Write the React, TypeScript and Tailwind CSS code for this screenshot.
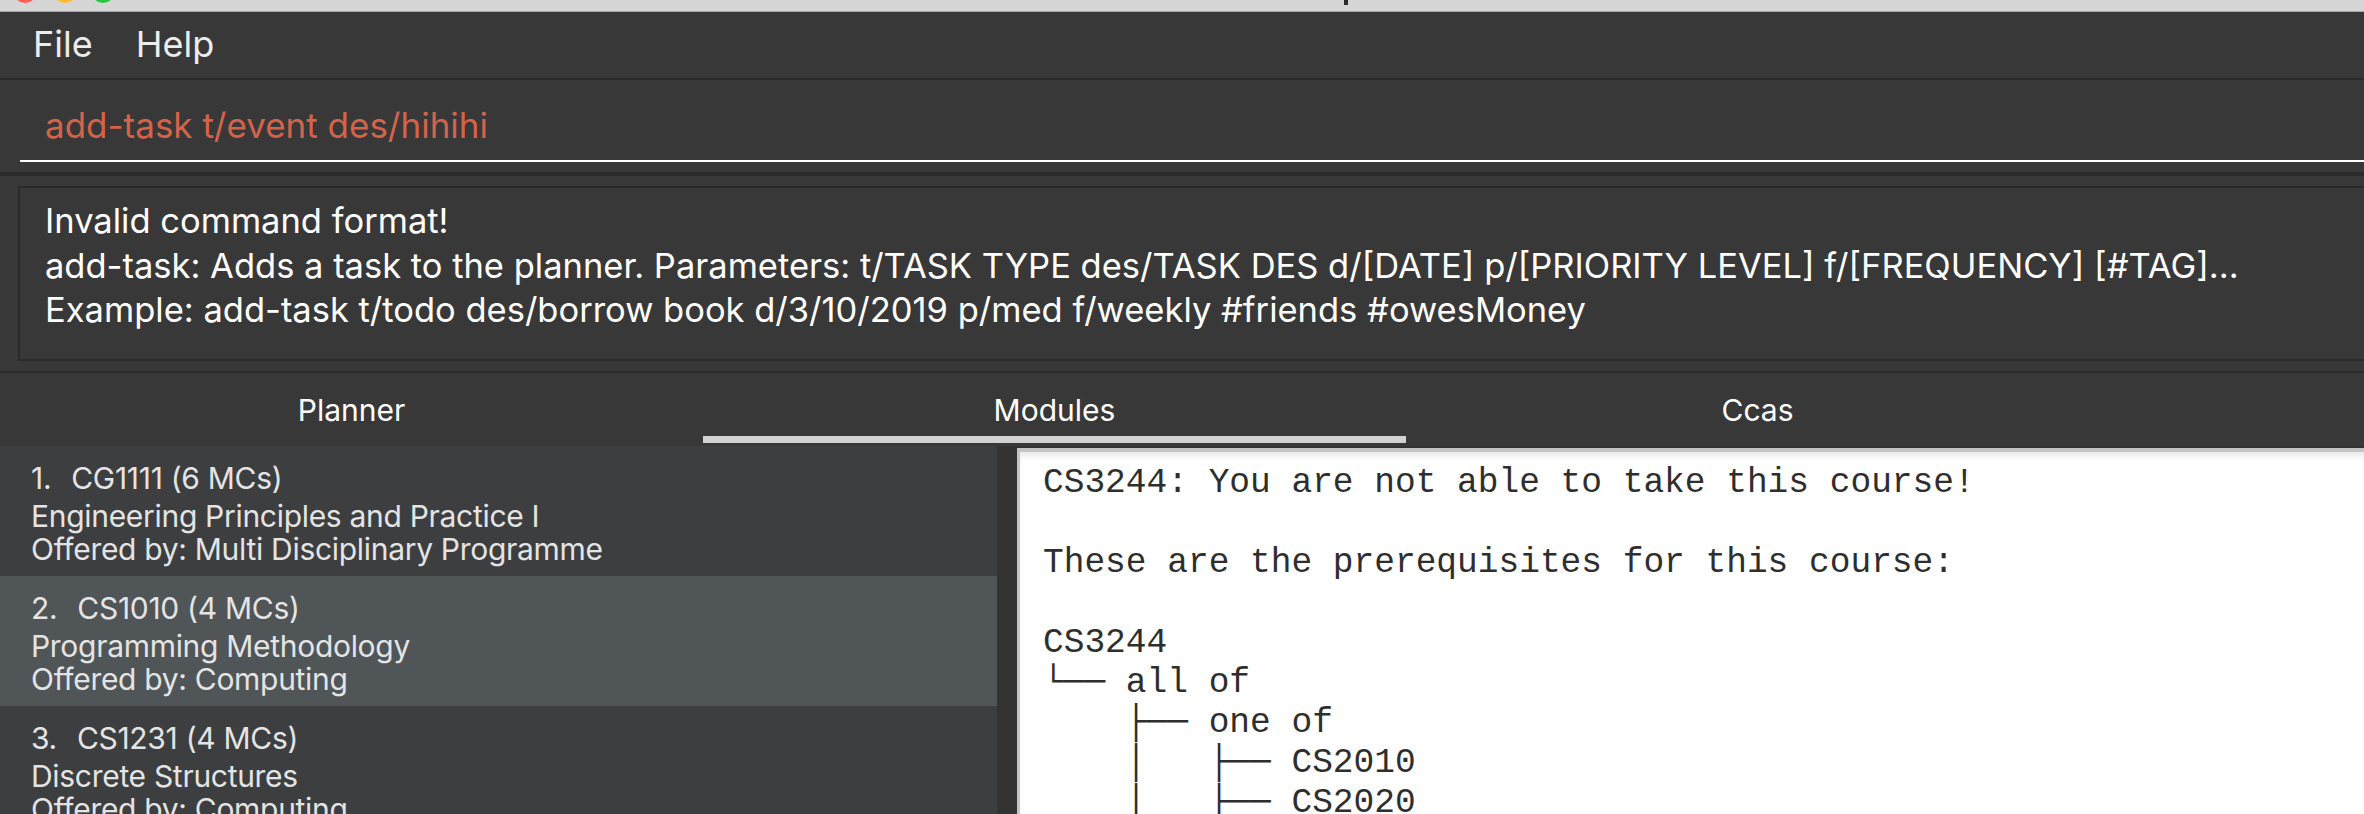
import React from "react";

interface IModule {
  code: string;
  mcs: number;
  title: string;
  faculty: string;
}

const modules: IModule[] = [
  { code: "CG1111", mcs: 6, title: "Engineering Principles and Practice I", faculty: "Multi Disciplinary Programme" },
  { code: "CS1010", mcs: 4, title: "Programming Methodology", faculty: "Computing" },
  { code: "CS1231", mcs: 4, title: "Discrete Structures", faculty: "Computing" },
  { code: "CS2030", mcs: 4, title: "Programming Methodology II", faculty: "Computing" },
];

const tabs = ["Planner", "Modules", "Ccas"];

const prereqLines = [
  "CS3244: You are not able to take this course!",
  "",
  "These are the prerequisites for this course:",
  "",
  "CS3244",
  "└── all of",
  "    ├── one of",
  "    │   ├── CS2010",
  "    │   ├── CS2020",
  "    │   └── CS2040",
];

const sans = "font-['Inter','Liberation_Sans',sans-serif]";

const ModuleCard: React.FC<{ module: IModule; index: number; selected: boolean }> = ({
  module,
  index,
  selected,
}) => {
  return (
    <div
      className={`h-[130px] shrink-0 pl-[31px] pt-[16px] text-[30px] tracking-[-0.3px] text-[#e4e4e4] ${
        selected ? "bg-[#505558]" : "bg-[#3c3e40]"
      }`}
    >
      <div className="flex gap-[20px] leading-[33px] whitespace-nowrap">
        <span>{index + 1}.</span>
        <span>
          {module.code} ({module.mcs} MCs)
        </span>
      </div>
      <div className="mt-[5px] leading-[33px] whitespace-nowrap">{module.title}</div>
      <div className="leading-[33px] whitespace-nowrap">Offered by: {module.faculty}</div>
    </div>
  );
};

export default function App() {
  return (
    <div className={`h-[814px] w-[2364px] overflow-hidden flex flex-col bg-[#383838] ${sans}`}>
      {/* Window title bar */}
      <div className="relative h-[12px] shrink-0 bg-[#d6d6d6] border-b border-[#a8a8a8] overflow-hidden">
        <div className="absolute left-[13px] top-[-21px] w-[24px] h-[24px] rounded-full bg-[#ff5f57]" />
        <div className="absolute left-[53px] top-[-21px] w-[24px] h-[24px] rounded-full bg-[#febc2e]" />
        <div className="absolute left-[91px] top-[-21px] w-[24px] h-[24px] rounded-full bg-[#28c840]" />
        <div className="absolute left-[1344px] top-0 w-[4px] h-[5px] bg-[#2a2a2a]" />
      </div>

      {/* Menu bar */}
      <div className="h-[68px] shrink-0 flex items-center gap-[43px] pl-[33px] pb-[2px] text-[36px] text-[#ececec] border-b-2 border-[#2a2a2a]">
        <span>File</span>
        <span>Help</span>
      </div>

      {/* Command box */}
      <div className="h-[96px] shrink-0 pl-[20px] border-b-4 border-[#2b2b2b]">
        <div className="h-[82px] pt-[25px] pl-[25px] border-b-2 border-white">
          <div className="text-[35px] leading-[40px] text-[#d4634a] whitespace-nowrap">
            add-task t/event des/hihihi
          </div>
        </div>
      </div>

      {/* Result display */}
      <div className="h-[197px] shrink-0 pt-[10px] pl-[18px] border-b-2 border-[#2b2b2b]">
        <div className="h-[175px] w-[2400px] border-2 border-[#2a2a2a] pt-[11px] pl-[25px] text-[34.5px] leading-[44.5px] text-white whitespace-nowrap">
          <div>Invalid command format!</div>
          <div>
            add-task: Adds a task to the planner. Parameters: t/TASK TYPE des/TASK DES d/[DATE] p/[PRIORITY LEVEL]
            f/[FREQUENCY] [#TAG]...
          </div>
          <div>Example: add-task t/todo des/borrow book d/3/10/2019 p/med f/weekly #friends #owesMoney</div>
        </div>
      </div>

      {/* Tabs */}
      <div className="h-[73px] shrink-0 flex">
        {tabs.map((tab) => (
          <div key={tab} className="w-[703px] flex flex-col items-center pt-[19px]">
            <span className="text-[30px] leading-[36px] text-white">{tab}</span>
            <div className={`mt-[8px] h-[7px] w-full ${tab === "Modules" ? "bg-[#d2d2d2]" : ""}`} />
          </div>
        ))}
      </div>

      {/* Content */}
      <div className="flex flex-1 min-h-0">
        <div className="w-[997px] shrink-0 flex flex-col bg-[#3c3e40] overflow-hidden">
          {modules.map((m, i) => (
            <ModuleCard key={m.code} module={m} index={i} selected={i === 1} />
          ))}
        </div>
        <div className="flex-1 bg-[#333333] pt-[2px] pl-[20px]">
          <div className="h-full bg-white border-t-4 border-l-[3px] border-[#c4c4c4] pt-[11px] pl-[23px] shadow-[inset_0_6px_8px_-4px_rgba(0,0,0,0.12)]">
            <pre className="font-['Liberation_Mono','DejaVu_Sans_Mono',monospace] text-[34.5px] leading-[40px] text-[#2e2e2e]">
              {prereqLines.join("\n")}
            </pre>
          </div>
        </div>
      </div>
    </div>
  );
}
